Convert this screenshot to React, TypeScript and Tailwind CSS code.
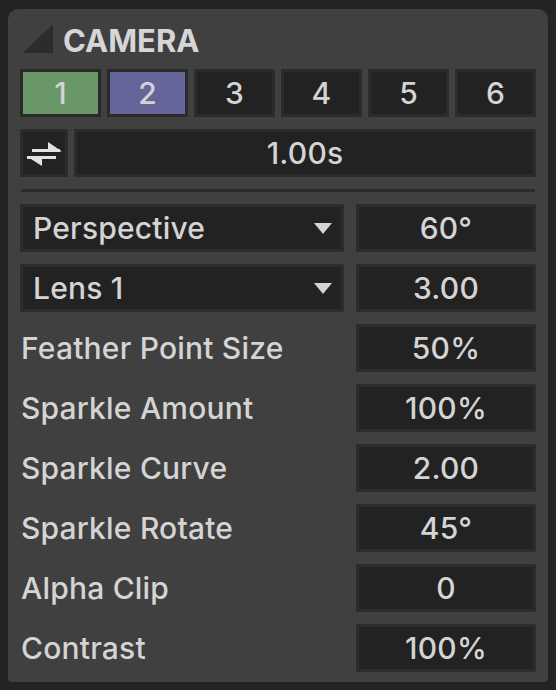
import React from 'react';

const box = 'h-12 border-[3px] border-[#2c2c2c] bg-[#222222] flex items-center';

const SwapIcon: React.FC = () => (
  <svg width="48" height="48" viewBox="0 0 42 42" className="blur-[0.5px]">
    <g fill="#e2e2e2">
      <rect x="9" y="17" width="28" height="3" />
      <polygon points="25,10 39,19.5 25,19.5" />
      <rect x="4" y="24" width="29" height="3" />
      <polygon points="4,24.5 19,24.5 19,34" />
    </g>
  </svg>
);

const Triangle: React.FC = () => (
  <svg width="30" height="29" viewBox="0 0 30 29">
    <polygon points="30,0 30,29 0,29" fill="#2c2c2c" />
  </svg>
);

const Caret: React.FC = () => (
  <svg width="18" height="11" viewBox="0 0 18 11">
    <polygon points="0,0 18,0 9,11" fill="#d4d4d4" />
  </svg>
);

const presets = [
  { n: '1', cls: 'bg-[#6a9767] border-[#2a2a2a]' },
  { n: '2', cls: 'bg-[#65659a] border-[#2a2a2a]' },
  { n: '3', cls: 'bg-[#222222] border-[#2c2c2c]' },
  { n: '4', cls: 'bg-[#222222] border-[#2c2c2c]' },
  { n: '5', cls: 'bg-[#222222] border-[#2c2c2c]' },
  { n: '6', cls: 'bg-[#222222] border-[#2c2c2c]' },
];

const params = [
  { label: 'Feather Point Size', value: '50%' },
  { label: 'Sparkle Amount', value: '100%' },
  { label: 'Sparkle Curve', value: '2.00' },
  { label: 'Sparkle Rotate', value: '45°' },
  { label: 'Alpha Clip', value: '0' },
  { label: 'Contrast', value: '100%' },
];

export default function App() {
  return (
    <div className="w-[556px] h-[690px] bg-[#232323] pl-2 pt-[9px] font-['Inter',sans-serif] font-medium text-[#d4d4d4] text-[30px] tracking-[0.2px] leading-none">
      <div className="w-[540px] h-[673px] bg-[#404040] rounded-t-[10px] rounded-b-[4px] px-3">
        {/* Header */}
        <div className="h-[60px] pt-[15px] pl-[3px] flex items-start gap-[10px]">
          <Triangle />
          <span className="font-bold text-[31px] tracking-normal leading-[29px] mt-[2px] text-[#d6d6d6]">CAMERA</span>
        </div>

        <div className="flex flex-col gap-3">
          {/* Preset buttons */}
          <div className="grid grid-cols-6 gap-[6px]">
            {presets.map((p) => (
              <div key={p.n} className={`h-12 border-[3px] flex items-center justify-center ${p.cls}`}>
                {p.n}
              </div>
            ))}
          </div>

          {/* Transition time */}
          <div className="flex gap-[6px]">
            <div className={`${box} w-12 justify-center`}>
              <SwapIcon />
            </div>
            <div className={`${box} flex-1 justify-center`}>1.00s</div>
          </div>

          <div className="h-[3px] bg-[#2b2b2b] mx-[1px]" />

          {/* Projection */}
          <div className="grid grid-cols-[324px_1fr] gap-3">
            <div className={`${box} justify-between pl-[10px] pr-[9px]`}>
              <span>Perspective</span>
              <Caret />
            </div>
            <div className={`${box} justify-center`}>60°</div>
          </div>
          <div className="grid grid-cols-[324px_1fr] gap-3">
            <div className={`${box} justify-between pl-[10px] pr-[9px]`}>
              <span>Lens 1</span>
              <Caret />
            </div>
            <div className={`${box} justify-center`}>3.00</div>
          </div>

          {params.map((p) => (
            <div key={p.label} className="grid grid-cols-[324px_1fr] gap-3 items-center">
              <span className="pl-[1px]">{p.label}</span>
              <div className={`${box} justify-center`}>{p.value}</div>
            </div>
          ))}
        </div>
      </div>
    </div>
  );
}
